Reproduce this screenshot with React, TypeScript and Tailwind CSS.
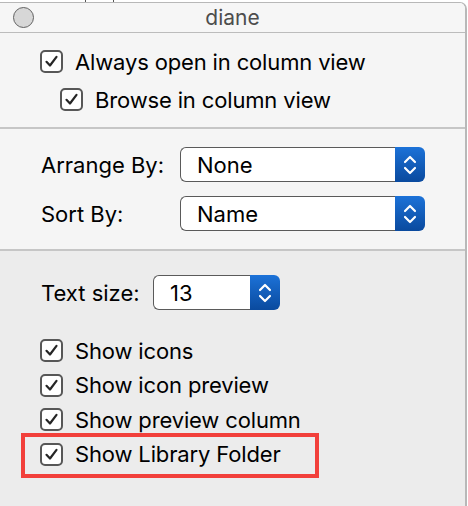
import React from "react";

const font = { fontFamily: "Inter, 'Liberation Sans', sans-serif" };

function Check({ label }: { label: string }) {
  return (
    <div className="flex items-center h-[23px]">
      <div className="w-[23px] h-[23px] rounded-[5px] border-2 border-[#575757] bg-white flex items-center justify-center shrink-0">
        <svg width="15" height="15" viewBox="0 0 15 15">
          <path d="M2.5 7.8 L6 11.5 L12.5 2.8" fill="none" stroke="#262626" strokeWidth="2.2" strokeLinecap="round" strokeLinejoin="round" />
        </svg>
      </div>
      <span className="ml-[12px] text-[22px] leading-none text-black tracking-[-0.15px]">{label}</span>
    </div>
  );
}

function Popup({ value, width }: { value: string; width: string }) {
  return (
    <div className={`flex h-[35px] ${width}`}>
      <div className="flex-1 flex items-center bg-white border-[1.5px] border-r-0 border-[#5a5a5a] rounded-l-[6px] pl-[16px] text-[22px] leading-none text-black">
        {value}
      </div>
      <div className="w-[30px] rounded-r-[6px] bg-gradient-to-b from-[#1c72d8] to-[#0a4a9e] flex items-center justify-center">
        <svg width="14" height="24" viewBox="0 0 14 24">
          <path d="M2 9 L7 4 L12 9" fill="none" stroke="white" strokeWidth="2.2" strokeLinecap="round" strokeLinejoin="round" />
          <path d="M2 15 L7 20 L12 15" fill="none" stroke="white" strokeWidth="2.2" strokeLinecap="round" strokeLinejoin="round" />
        </svg>
      </div>
    </div>
  );
}

export default function App() {
  return (
    <div className="w-[468px] h-[506px] bg-white overflow-hidden flex flex-col" style={font}>
      <div className="h-[2px] flex shrink-0">
        <div className="w-[85px]" />
        <div className="w-[1px] bg-[#555]" />
        <div className="w-[27px]" />
        <div className="w-[1px] bg-[#555]" />
      </div>
      <div className="relative w-[467px] flex-1 flex flex-col border-t border-r-2 border-[#b8b8b8] rounded-tr-[7px] overflow-hidden">
        <div className="relative h-[30px] shrink-0 bg-[#f6f6f6] border-b-[1.5px] border-[#bcbcbc] flex items-center justify-center">
          <div className="absolute left-[13px] top-[4px] w-[21px] h-[21px] rounded-full bg-[#d7d7d7] border-[1.5px] border-[#616161]" />
          <span className="text-[21px] text-[#4d4d4d] leading-none">diane</span>
        </div>
        <div className="h-[96px] shrink-0 bg-[#f5f5f5] border-b-2 border-[#c6c6c6] pl-[40px] pt-[17px] flex flex-col gap-[15px]">
          <Check label="Always open in column view" />
          <div className="pl-[20px]">
            <Check label="Browse in column view" />
          </div>
        </div>
        <div className="h-[122px] shrink-0 bg-[#f5f5f5] border-b-2 border-[#c6c6c6] pl-[41px] pt-[18px] flex flex-col gap-[14px]">
          <div className="flex items-center">
            <span className="w-[139px] text-[22px] leading-none text-black">Arrange By:</span>
            <Popup value="None" width="w-[245px]" />
          </div>
          <div className="flex items-center">
            <span className="w-[139px] text-[22px] leading-none text-black">Sort By:</span>
            <Popup value="Name" width="w-[245px]" />
          </div>
        </div>
        <div className="relative flex-1 bg-[#ececec] pl-[40px] pt-[24px]">
          <div className="flex items-center pl-[1px]">
            <span className="w-[112px] text-[22px] leading-none text-black">Text size:</span>
            <Popup value="13" width="w-[127px]" />
          </div>
          <div className="mt-[29px] flex flex-col gap-[11.5px]">
            <Check label="Show icons" />
            <Check label="Show icon preview" />
            <Check label="Show preview column" />
            <Check label="Show Library Folder" />
          </div>
          <div className="absolute left-[21px] top-[182px] w-[298px] h-[45px] border-[4.5px] border-[#f2403b]" />
        </div>
      </div>
    </div>
  );
}
